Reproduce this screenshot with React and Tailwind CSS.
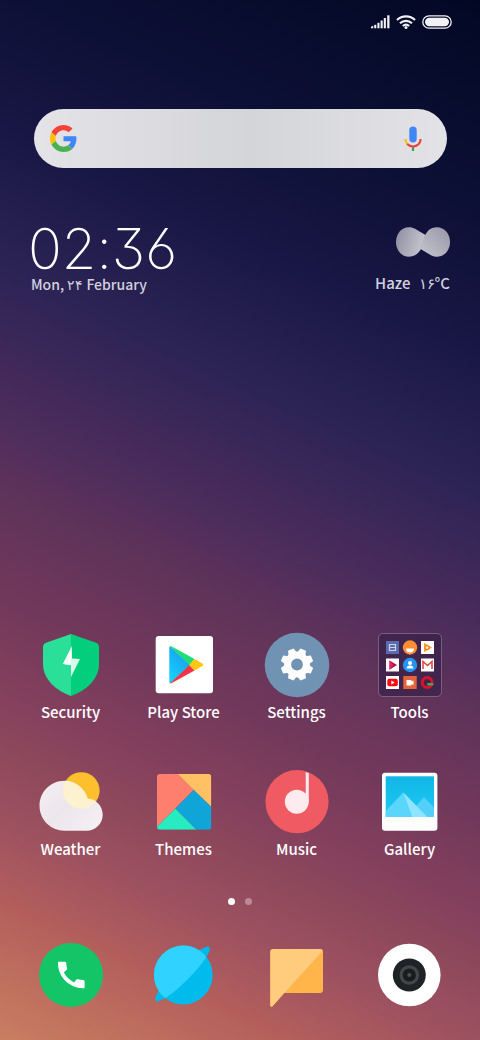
import { useState } from 'react';

const SignalIcon = () => (
  <svg className="w-[19px] h-[14px]" viewBox="0 0 19 14" fill="#f1f1f6" aria-hidden="true">
    <path d="M0 13.300v-1.600l2.200-1v2.600z" />
    <rect x="3.200" y="9.800" width="2.100" height="3.500" />
    <rect x="6.400" y="7.800" width="2.100" height="5.500" />
    <rect x="9.600" y="5.500" width="2.100" height="7.800" />
    <rect x="12.800" y="3" width="2.100" height="10.300" />
    <rect x="16.200" y="0.300" width="2.300" height="13" />
  </svg>
);

const WifiIcon = () => (
  <svg className="w-5 h-[14px]" viewBox="0 0 20 14" fill="none" stroke="#f1f1f6" strokeWidth="2.200" aria-hidden="true">
    <path d="M1 5C6 .2 14 .2 19 5" />
    <path d="M4 8.200c3.400-3.200 8.600-3.200 12 0" />
    <path d="M6.800 11c1.900-1.700 4.500-1.700 6.400 0" />
    <circle cx="10" cy="12.400" r="1.500" fill="#f1f1f6" stroke="none" />
  </svg>
);

const BatteryIcon = () => (
  <svg className="w-[30px] h-[14px]" viewBox="0 0 30 14" aria-hidden="true">
    <rect x="0.800" y="0.800" width="28.400" height="12.400" rx="6.200" fill="none" stroke="#f1f1f6" strokeWidth="1.300" />
    <rect x="3" y="2.800" width="24" height="8.400" rx="4.200" fill="#f1f1f6" />
  </svg>
);

const GoogleIcon = () => (
  <svg className="w-[27px] h-[27px] shrink-0" viewBox="0 0 48 48" aria-hidden="true">
    <path fill="#f44336" d="M24 9.5c3.54 0 6.71 1.22 9.21 3.6l6.85-6.85C35.9 2.38 30.47 0 24 0 14.62 0 6.51 5.38 2.56 13.22l7.98 6.19C12.43 13.72 17.74 9.5 24 9.5z" />
    <path fill="#4285f4" d="M46.98 24.55c0-1.57-.15-3.09-.38-4.55H24v9.02h12.94c-.58 2.96-2.26 5.48-4.78 7.18l7.73 6c4.51-4.18 7.09-10.36 7.09-17.65z" />
    <path fill="#ffc107" d="M10.53 28.59c-.48-1.45-.76-2.99-.76-4.59s.27-3.14.76-4.59l-7.98-6.19C.92 16.46 0 20.12 0 24c0 3.88.92 7.54 2.56 10.78l7.97-6.19z" />
    <path fill="#4caf50" d="M24 48c6.48 0 11.93-2.13 15.89-5.81l-7.73-6c-2.15 1.45-4.92 2.3-8.16 2.3-6.26 0-11.57-4.22-13.47-9.91l-7.98 6.19C6.51 42.62 14.62 48 24 48z" />
  </svg>
);

const MicIcon = () => (
  <svg className="w-6 h-7" viewBox="0 0 24 28" fill="none" aria-hidden="true">
    <rect x="8.300" y="1.500" width="7.400" height="16" rx="3.700" fill="#4285f4" />
    <path d="M12 21.500V26" stroke="#34a853" strokeWidth="2.200" />
    <path d="M4.400 14c0 2.300.9 4.200 2.300 5.500" stroke="#fbbc05" strokeWidth="2.100" />
    <path d="M6.200 19c3.200 3.300 8.400 3.300 11.600 0 1.200-1.300 1.800-3 1.800-5" stroke="#ea4335" strokeWidth="2.100" />
  </svg>
);

const HazeIcon = () => (
  <svg className="w-[54px] h-[30px]" viewBox="0 0 54 30" aria-hidden="true">
    <defs>
      <linearGradient id="hazeLeft" x1="0" y1="0" x2="1" y2="0.300">
        <stop offset="0" stopColor="#8c8ca0" />
        <stop offset="1" stopColor="#c4c4cd" />
      </linearGradient>
      <linearGradient id="hazeRight" x1="0" y1="1" x2="1" y2="0">
        <stop offset="0" stopColor="#c6c6d0" />
        <stop offset="1" stopColor="#9696a6" />
      </linearGradient>
    </defs>
    <path d="M12.500 .3C15.500 .3 17.500 1 19 1.800L29.500 8L25 22C22 27 18 29.700 12.500 29.700C5.500 29.700 0 23 0 15S5.500 .3 12.500 .3z" fill="url(#hazeLeft)" />
    <path d="M41 .3C34 .3 30 5 28 11L24.500 22L35 28.200C37 29.200 39 29.700 41 29.700C48.500 29.700 54 23 54 15S48.500 .3 41 .3z" fill="url(#hazeRight)" />
  </svg>
);

const SecurityIcon = () => (
  <>
    <path d="M32 1L57 9.800Q60 11 60 14V31C60 47 46 58 32 63z" fill="#03ce7c" />
    <path d="M32 1L7 9.800Q4 11 4 14V31C4 47 18 58 32 63z" fill="#2adf97" />
    <path d="M33 13L24 31L32 32V44L41 26L33 25.500z" fill="#d8fbe9" />
    <path d="M33 13L24 31L32 32V15z" fill="#fff" />
  </>
);

const PlayStoreIcon = () => (
  <>
    <defs>
      <linearGradient id="playBlue" x1="0" y1="1" x2="0.600" y2="0">
        <stop offset="0" stopColor="#12d8fa" />
        <stop offset="1" stopColor="#1a9df0" />
      </linearGradient>
    </defs>
    <rect x="3.700" y="3" width="57.300" height="57.300" rx="3" fill="#fff" />
    <path d="M17.300 14.500v34.500q0 1 .8 1.300L38 32 18.100 13.200q-.8.300-.8 1.300z" fill="url(#playBlue)" />
    <path d="M18 13.200q.8-.4 1.800.2L42.500 26 37.500 32z" fill="#1fdd78" />
    <path d="M18 50.300q.8.400 1.800-.2L42.500 37.500 37.500 32z" fill="#ef3349" />
    <path d="M42.500 26l8 4.600q1.700 1.200 0 2.400L42.500 37.500 37.200 32z" fill="#ffc70f" />
  </>
);

const SettingsIcon = () => (
  <>
    <circle cx="32" cy="32" r="32.300" fill="#7093b3" />
    <g transform="translate(32 31.500)">
      {[22.5, 67.5, 112.5, 157.5, 202.5, 247.5, 292.5, 337.5].map(angle => (
        <path key={angle} d="M-4.400-11L-3-16.200H3L4.400-11z" fill="#fff" transform={`rotate(${angle})`} />
      ))}
      <circle r="9.400" fill="none" stroke="#fff" strokeWidth="7" />
    </g>
  </>
);

const ToolsIcon = () => (
  <>
    <rect x="0.500" y="0.500" width="63" height="63" rx="4.500" fill="#3a2249" fillOpacity="0.750" stroke="#fff" strokeOpacity="0.250" />
    <rect x="8" y="8" width="13" height="13" fill="#5b6cae" />
    <path d="M11.500 11.500h6v6h-6zM11.500 14.500h6" fill="none" stroke="#ccd4f0" strokeWidth="1.200" />
    <circle cx="32" cy="14.500" r="7.200" fill="#f98e35" />
    <path d="M28 15.500h8a4 4 0 0 1-8 0z" fill="#fff" />
    <rect x="43" y="8" width="13" height="13" fill="#fff" />
    <path d="M46 9.800L54 14.500L46 19.300z" fill="#fba51a" />
    <circle cx="49" cy="14.600" r="2" fill="#fff3c0" stroke="#ee6b20" />
    <rect x="8" y="25.500" width="13" height="13" fill="#fff" />
    <path d="M11.500 27.500L19 32L11.500 36.800z" fill="#b30c45" />
    <path d="M11.500 27.500L15.500 32L11.500 36.800z" fill="#e91e63" />
    <circle cx="32" cy="32" r="7.200" fill="#2494f2" />
    <circle cx="32" cy="30" r="2" fill="#fff" />
    <path d="M28.500 35.500q0-2.500 2.500-3h2q2.500.500 2.500 3z" fill="#fff" />
    <rect x="43" y="25.500" width="13" height="13" fill="#fff" />
    <path d="M45 36v-7.500l4.500 4 4.500-4V36" fill="none" stroke="#dc4a3f" strokeWidth="1.600" />
    <rect x="8" y="43" width="13" height="13" fill="#fff" />
    <rect x="9.300" y="45.800" width="10.500" height="7.400" rx="2" fill="#f80d0d" />
    <path d="M13.400 47.600l3.200 1.900-3.200 1.900z" fill="#fff" />
    <rect x="25.300" y="43" width="13.400" height="13" fill="#e2663a" />
    <path d="M28.500 47h5v1.500l2-1v4.500l-2-1v1.500h-5z" fill="#fff" />
    <circle cx="49.200" cy="49.500" r="4.900" fill="none" stroke="#d91428" strokeWidth="3" />
    <rect x="49" y="50" width="6.500" height="2.600" rx="1.300" fill="#45a35a" />
  </>
);

const WeatherIcon = () => (
  <>
    <defs>
      <clipPath id="cloudClip">
        <path d="M25.500 10.700C36 10.700 46 18 48.600 28.800C57 28.800 63.700 36 63.700 44.700S56.500 60.700 47.700 60.700H25.500C11.700 60.700.5 49.500.5 35.700S11.700 10.700 25.500 10.700z" />
      </clipPath>
      <linearGradient id="cloudFill" x1="0" y1="0" x2="1" y2="1">
        <stop offset="0" stopColor="#f7f1f3" />
        <stop offset="0.500" stopColor="#ece6ed" />
        <stop offset="1" stopColor="#f7f2f5" />
      </linearGradient>
    </defs>
    <circle cx="42.300" cy="20.500" r="18.300" fill="#fcbf2d" />
    <g clipPath="url(#cloudClip)">
      <rect width="64" height="64" fill="url(#cloudFill)" />
      <circle cx="42.300" cy="20.500" r="18.300" fill="#fdf2d0" />
    </g>
  </>
);

const ThemesIcon = () => (
  <>
    <clipPath id="themesClip">
      <rect x="5" y="4" width="54.300" height="55.700" rx="3" />
    </clipPath>
    <g clipPath="url(#themesClip)">
      <path d="M5 4h20.700l16 16L5 56.700z" fill="#ff7f6e" />
      <path d="M25.700 4h33.600v33L41.700 20z" fill="#ffc163" />
      <path d="M41.700 20l17.600 17v22.700H44.300L23.300 38.500z" fill="#10a5d8" />
      <path d="M23.300 38.500l21 21.200H5v-3z" fill="#27ebc1" />
    </g>
  </>
);

const MusicIcon = () => (
  <>
    <circle cx="32" cy="31.700" r="31.600" fill="#f05a62" />
    <circle cx="31.800" cy="31.700" r="12" fill="#fdebee" />
    <path d="M40.700 2.200l3.100.8v28.700h-3.100z" fill="#fdebee" />
  </>
);

const GalleryIcon = () => (
  <>
    <defs>
      <linearGradient id="gallerySky" x1="0" y1="0" x2="0" y2="1">
        <stop offset="0" stopColor="#10b7e6" />
        <stop offset="1" stopColor="#1fc8f5" />
      </linearGradient>
    </defs>
    <rect x="4" y="2.700" width="55.400" height="58" rx="3" fill="#fff" />
    <rect x="7.700" y="6.300" width="48.300" height="40.700" fill="url(#gallerySky)" />
    <path d="M36 47V38L46 27.300L56 37.500V47z" fill="#54d0f8" />
    <path d="M7.700 41L25.300 22.500L49.300 47H7.700z" fill="#5bd6fb" />
    <path d="M25.300 22.500L49.300 47H34.300z" fill="#8fe5ff" />
  </>
);

const PhoneIcon = () => (
  <>
    <circle cx="32" cy="32" r="32" fill="#13c567" />
    <path
      transform="translate(14.500 14.200) scale(1.480)"
      fill="#fff"
      d="M20.010 15.380c-1.230 0-2.420-.2-3.530-.56a.977.977 0 0 0-1.010.24l-1.570 1.970c-2.830-1.350-5.480-3.900-6.890-6.830l1.950-1.660c.27-.28.35-.67.24-1.020-.37-1.110-.56-2.300-.56-3.530 0-.54-.45-.99-.99-.99H3.400C3.100 3 3 3.240 3 3.990 3 13.280 10.730 21 20.010 21c.71 0 .99-.13.99-.6v-4.030c0-.54-.45-.99-.99-.99z"
    />
  </>
);

const BrowserIcon = () => (
  <>
    <clipPath id="planetClip">
      <circle cx="31.300" cy="32" r="29.400" />
    </clipPath>
    <ellipse cx="30.500" cy="31" rx="38" ry="7.500" transform="rotate(-45 30.500 31)" fill="#02b7e9" />
    <circle cx="31.300" cy="32" r="29.400" fill="#01bbec" />
    <g clipPath="url(#planetClip)">
      <ellipse cx="30.500" cy="31" rx="38" ry="7.500" transform="rotate(-45 30.500 31)" fill="#30d3ff" />
      <path d="M-10 71.500L71-9.500H-10z" fill="#30d3ff" />
    </g>
  </>
);

const MessagesIcon = () => (
  <>
    <path d="M8.500 6H55q3 0 3 3v38q0 3-3 3H19.300L7.500 63.300q-2.200 1.200-2.200-1.300V9q0-3 3.200-3z" fill="#ffb54a" />
    <path d="M8.500 6H55q2 0 2.800 1.800L19.300 50 7.500 63.300q-2.200 1.200-2.200-1.300V9q0-3 3.200-3z" fill="#ffcb7d" />
  </>
);

const CameraIcon = () => (
  <>
    <circle cx="31.300" cy="32" r="31.300" fill="#fff" />
    <circle cx="31.300" cy="32" r="16.500" fill="#202326" />
    <circle cx="31.300" cy="32" r="8.200" fill="#191b1d" stroke="#43464a" strokeWidth="3.200" />
    <circle cx="31.300" cy="32" r="2" fill="#4c4f53" />
  </>
);

const apps = [
  { name: 'Security', Icon: SecurityIcon },
  { name: 'Play Store', Icon: PlayStoreIcon },
  { name: 'Settings', Icon: SettingsIcon },
  { name: 'Tools', Icon: ToolsIcon },
  { name: 'Weather', Icon: WeatherIcon },
  { name: 'Themes', Icon: ThemesIcon },
  { name: 'Music', Icon: MusicIcon },
  { name: 'Gallery', Icon: GalleryIcon },
];

const dock = [
  { name: 'Phone', Icon: PhoneIcon },
  { name: 'Browser', Icon: BrowserIcon },
  { name: 'Messages', Icon: MessagesIcon },
  { name: 'Camera', Icon: CameraIcon },
];

const AppIcon = ({ children }) => (
  <svg className="w-16 h-16 overflow-visible" viewBox="0 0 64 64" aria-hidden="true">
    {children}
  </svg>
);

const App = () => {
  const [query, setQuery] = useState('');
  const [page, setPage] = useState(0);

  return (
    <div className="min-h-screen flex flex-col text-white font-['Noto_Sans_CJK_SC','Noto_Sans',sans-serif] bg-[linear-gradient(205deg,#020824_0%,#0d1036_17%,#191745_28%,#2c2455_39%,#482b5c_49%,#60335a_57%,#74395b_66%,#83405d_72%,#914a5c_78%,#9e5260_83%,#b35e5c_89%,#c97e60_100%)]">
      {/* Status bar */}
      <header className="flex justify-end items-center gap-[6px] h-11 pr-7">
        <SignalIcon />
        <WifiIcon />
        <BatteryIcon />
      </header>

      {/* Search */}
      <form
        role="search"
        onSubmit={(e) => e.preventDefault()}
        className="flex items-center h-[59px] mt-[65px] ml-[34px] mr-[33px] pl-4 pr-[22px] rounded-full bg-[linear-gradient(90deg,#e4e3e8_0%,#d4d5d9_52%,#e2e2e7_100%)]"
      >
        <GoogleIcon />
        <input
          type="text"
          aria-label="Search"
          value={query}
          onChange={(e) => setQuery(e.target.value)}
          className="flex-1 min-w-0 h-full px-4 text-base text-gray-800 bg-transparent outline-none"
        />
        <button type="button" aria-label="Voice search">
          <MicIcon />
        </button>
      </form>

      {/* Clock and weather */}
      <section className="flex justify-between items-start mt-[59px] pl-[31px] pr-[30px]">
        <div>
          <div className="-ml-[3px] h-[47px] text-[56px] leading-[44px] font-extralight font-['Inter',sans-serif] [font-feature-settings:'cv03','cv09','calt'_0]">02:36</div>
          <div className="text-sm leading-5 font-medium text-[#d3d1df]">Mon, ۲۴ February</div>
        </div>
        <div className="flex flex-col items-end gap-4">
          <HazeIcon />
          <div className="flex gap-2 text-[15px] leading-5 font-medium text-[#d3d1df]">
            <span>Haze</span>
            <span dir="ltr">۱۶°C</span>
          </div>
        </div>
      </section>

      <div className="flex-1" />

      {/* Apps */}
      <main className="grid grid-cols-4 gap-y-[46px] px-[14px]">
        {apps.map(({ name, Icon }) => (
          <button key={name} type="button" className="flex flex-col items-center gap-[3px]">
            <AppIcon>
              <Icon />
            </AppIcon>
            <span className="text-[15px] leading-6 font-medium">{name}</span>
          </button>
        ))}
      </main>

      {/* Page dots */}
      <div className="flex justify-center gap-[10px] mt-[37px]">
        {[0, 1].map(i => (
          <button
            key={i}
            type="button"
            aria-label={`Page ${i + 1}`}
            onClick={() => setPage(i)}
            className={`w-[7px] h-[7px] rounded-full ${page === i ? 'bg-white' : 'bg-white/35'}`}
          />
        ))}
      </div>

      {/* Dock */}
      <nav className="grid grid-cols-4 mt-[38px] px-[14px] pb-[33px]">
        {dock.map(({ name, Icon }) => (
          <button key={name} type="button" aria-label={name} className="flex justify-center">
            <AppIcon>
              <Icon />
            </AppIcon>
          </button>
        ))}
      </nav>
    </div>
  );
};

export default App;
